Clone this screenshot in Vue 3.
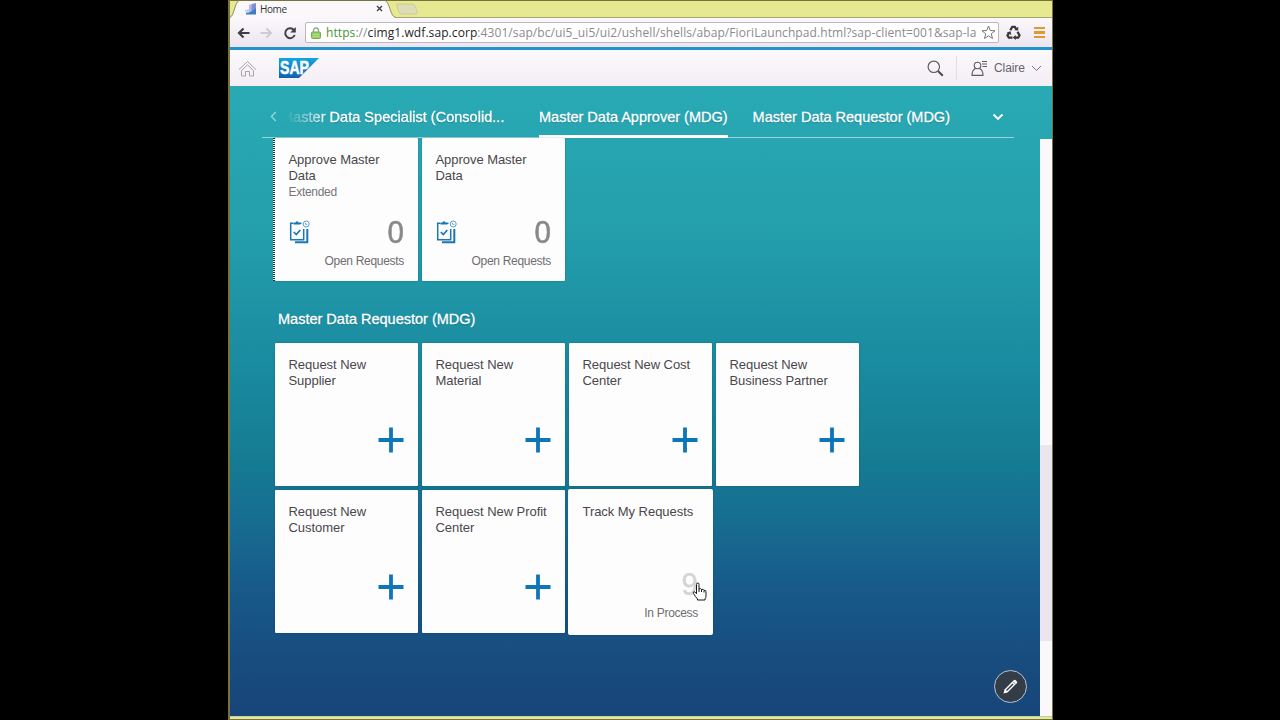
<template>
  <div class="screen">
    <div class="browser">
      <div class="tab-strip">
        <svg class="tab-shapes" width="200" height="18" viewBox="0 0 200 18">
          <path d="M0 17.500C4 16 5 2 9 1h146c5 1 5 16 11 16.500V18H0z" fill="#fbf8fb" />
          <path d="M0 17.500C4 16 5 2 9 .5M155 .5c5 1.500 5 16.500 11 17" fill="none" stroke="#8d8c5d" />
          <path d="M166.500 4h16q2 0 3 3l2 5q0 2-2 2h-14q-2 0-3-3z" fill="#dedcb6" stroke="#c3c190" stroke-width=".7" />
        </svg>
        <div class="tab-label">
          <svg width="12" height="12" viewBox="0 0 12 12">
            <path d="M0 7l4-1v5H1z" fill="#b9d9f2" />
            <path d="M4 2l3-1v10H4z" fill="#b9b5e4" />
            <path d="M7 1l4-1v11H6z" fill="#7f8fd4" />
            <path d="M1 10q5 0 10-5v6.500H1z" fill="#3b7cc6" />
          </svg>
          <span class="tab-name">Home</span>
          <svg class="tab-close" width="7" height="7" viewBox="0 0 7 7">
            <path d="M1 1l5 5M6 1L1 6" stroke="#3c3c40" stroke-width="1.300" />
          </svg>
        </div>
      </div>

      <div class="toolbar">
        <svg class="nav-icon" width="13" height="12" viewBox="0 0 13 12">
          <path d="M12.500 6H2M6.500 1.500L2 6l4.500 4.500" fill="none" stroke="#3f3f42" stroke-width="2.200" />
        </svg>
        <svg class="nav-icon" width="13" height="12" viewBox="0 0 13 12">
          <path d="M.5 6H11M6.500 1.500L11 6l-4.500 4.500" fill="none" stroke="#cfcbd0" stroke-width="2" />
        </svg>
        <svg class="nav-icon" width="14" height="14" viewBox="0 0 14 14">
          <path d="M11 4.200A4.900 4.900 0 1 0 11.700 9" fill="none" stroke="#3f3f42" stroke-width="2" />
          <path d="M12.800 1v5.500H7.300z" fill="#3f3f42" />
        </svg>
        <div class="address">
          <svg class="lock" width="10" height="12" viewBox="0 0 10 12">
            <path d="M2.500 6V3.500a2.500 2.500 0 0 1 5 0V6" fill="none" stroke="#9aa691" stroke-width="1.400" />
            <rect x=".5" y="5" width="9" height="6.500" rx="1" fill="#93cf62" stroke="#78ad52" />
            <path d="M2 7.500h6M2 9.500h6" stroke="#bce29b" stroke-width=".8" />
          </svg>
          <div class="url"><span class="scheme">https</span>://<span class="host">cimg1.wdf.sap.corp</span>:4301/sap/bc/ui5_ui5/ui2/ushell/shells/abap/FioriLaunchpad.html?sap-client=001&amp;sap-la</div>
          <svg class="star" width="15" height="15" viewBox="0 0 15 15">
            <path d="M7.500 1l1.800 4.500 4.700.3-3.700 3 1.200 4.700-4-2.600-4 2.600 1.200-4.700-3.700-3 4.700-.3z" fill="#fff" stroke="#77757c" />
          </svg>
        </div>
        <svg class="recycle" width="15" height="15" viewBox="0 0 15 15">
          <g fill="none" stroke="#38383b" stroke-width="2.300">
            <path d="M4.300 5.300l2-3.500h2.500l1.500 2.500" />
            <path d="M11.500 6.800l2 3.500-1.300 2.400H9" />
            <path d="M6.500 12.700H2.800L1.500 10.300l1.700-2.800" />
          </g>
          <path d="M8.500 5.200l3.800.3-.2-3.700zM9.700 10v5L6.800 12.500zM.8 7.500l3.700-1.200.9 3.600z" fill="#38383b" />
        </svg>
        <div class="menu-bars"><i></i><i></i><i></i></div>
      </div>

      <header class="shell">
        <svg class="home" width="19" height="17" viewBox="0 0 19 17">
          <g fill="none" stroke="#a5a2a8">
            <path d="M1 9.500L9.500 1.500 18 9.500" />
            <path d="M3.500 10.500l6-5.700 6 5.700V16h-4v-4.500h-4V16h-4z" />
          </g>
        </svg>
        <svg class="logo" width="40" height="20" viewBox="0 0 40 20">
          <defs>
            <linearGradient id="sapBlue" x1="0" y1="0" x2="0" y2="1">
              <stop offset="0" stop-color="#12a5e3" />
              <stop offset="1" stop-color="#1260b0" />
            </linearGradient>
          </defs>
          <path d="M0 0h40L20 20H0z" fill="url(#sapBlue)" />
          <text x="1" y="16" textLength="29" lengthAdjust="spacingAndGlyphs">SAP</text>
        </svg>
        <svg class="search" width="17" height="17" viewBox="0 0 17 17">
          <circle cx="6.800" cy="6.800" r="5.700" fill="none" stroke="#5d5b60" stroke-width="1.200" />
          <path d="M11 11l4.800 4.800" stroke="#4b494e" stroke-width="2" />
        </svg>
        <div class="user">
          <svg width="17" height="17" viewBox="0 0 17 17">
            <g fill="none" stroke="#5d5b60" stroke-width="1.100">
              <circle cx="6.500" cy="5.500" r="3.300" />
              <path d="M4.500 8.500Q1 10 1 15.400h11Q12 10 8.500 8.500M11 1.500h5M11 4h5M11.500 6.500H16" />
            </g>
          </svg>
          <span>Claire</span>
          <svg width="11" height="7" viewBox="0 0 11 7">
            <path d="M1 1l4.500 4.500L10 1" fill="none" stroke="#77757a" />
          </svg>
        </div>
      </header>

      <main class="launchpad">
        <nav class="groups">
          <svg class="prev" width="7" height="11" viewBox="0 0 7 11">
            <path d="M5.800 1L1.500 5.500 5.800 10" fill="none" stroke="#8ed3db" stroke-width="1.500" />
          </svg>
          <a class="group faded">Master Data Specialist (Consolid...</a>
          <a class="group active">Master Data Approver (MDG)</a>
          <a class="group">Master Data Requestor (MDG)</a>
          <svg class="more" width="12" height="8" viewBox="0 0 12 8">
            <path d="M1.500 1.500L6 6l4.500-4.500" fill="none" stroke="#fff" stroke-width="1.800" />
          </svg>
        </nav>

        <section class="tiles">
          <article v-for="(tile, i) in approveTiles" :key="i" class="tile" :class="{ focused: tile.focused }">
            <h3>{{ tile.title }}</h3>
            <p v-if="tile.subtitle" class="subtitle">{{ tile.subtitle }}</p>
            <div class="kpi">
              <svg width="22" height="24" viewBox="0 0 22 24">
                <g fill="none" stroke="#1b76b2" stroke-width="1.500">
                  <path d="M4 3.200H1.700v16.500h13V9M11.500 3.200h1M4.500 3.800h7" />
                  <path d="M18.300 9v13.300H6" stroke-width="2" />
                  <path d="M4.800 12l2.500 2.500 4-4.500" stroke-width="1.700" />
                </g>
                <path d="M4.500 4V2.500h2q1.500-2.500 3 0h2V4z" fill="#1b76b2" />
                <circle cx="17.200" cy="4" r="3" fill="#fff" stroke="#5b9fc5" />
                <path d="M16.500 2.800v1.500h1.800" fill="none" stroke="#5b9fc5" stroke-width=".9" />
              </svg>
              <span class="count">{{ tile.count }}</span>
            </div>
            <div class="unit">{{ tile.unit }}</div>
          </article>
        </section>

        <h2>Master Data Requestor (MDG)</h2>

        <section class="tiles">
          <article v-for="tile in requestTiles" :key="tile.title" class="tile" :class="{ hovered: tile.hovered }">
            <h3>{{ tile.title }}</h3>
            <template v-if="tile.unit">
              <div class="kpi loading">
                <span class="count">{{ tile.count }}</span>
              </div>
              <div class="unit">{{ tile.unit }}</div>
            </template>
            <svg v-else class="plus" width="26" height="26" viewBox="0 0 26 26">
              <path d="M13 .5v25M.5 13h25" stroke="#0d76b8" stroke-width="3.800" />
            </svg>
          </article>
        </section>

        <div class="scrollbar"><div class="thumb"></div></div>

        <button class="edit">
          <svg width="17" height="17" viewBox="0 0 17 17">
            <path d="M1.500 15.500l1-4L11.700 2.300q1-1 2 0l1 1q1 1 0 2L5.500 14.500z" fill="#fff" />
            <path d="M4.500 12.500l6.500-6.500" stroke="#343c47" stroke-width="1.400" />
            <path d="M11.200 3.800l2 2" stroke="#343c47" stroke-width=".7" />
          </svg>
        </button>
      </main>
    </div>

    <svg class="pointer" width="15" height="19" viewBox="0 0 15 19">
      <path
        d="M4.500 11V2.500q0-1.500 1.300-1.500T7 2.500V7q2-1 2.500.5 2-.8 2.500.8 2-.3 2 1.500v4q0 2-1 3v1.200H5.500V17q-2-2-4-5.500-.6-1.500.5-1.800 1 0 2.500 2zM7 7v3M9.500 7.500V10M12 8.500v2"
        fill="#fff"
        stroke="#161616"
        stroke-linejoin="round"
      />
    </svg>
  </div>
</template>

<script setup>
const approveTiles = [
  { title: 'Approve Master Data', subtitle: 'Extended', count: 0, unit: 'Open Requests', focused: true },
  { title: 'Approve Master Data', count: 0, unit: 'Open Requests' }
]

const requestTiles = [
  { title: 'Request New Supplier' },
  { title: 'Request New Material' },
  { title: 'Request New Cost Center' },
  { title: 'Request New Business Partner' },
  { title: 'Request New Customer' },
  { title: 'Request New Profit Center' },
  { title: 'Track My Requests', count: 9, unit: 'In Process', hovered: true }
]
</script>

<style>
body {
  background: #000;
}
</style>

<style scoped>
.screen {
  position: relative;
  display: flex;
  justify-content: center;
  width: 1280px;
  height: 720px;
  overflow: hidden;
  background: #000;
  font-family: "Liberation Sans", Arial, sans-serif;
}

.screen * {
  box-sizing: border-box;
}

.screen svg {
  display: block;
  flex: none;
}

.browser {
  display: flex;
  flex-direction: column;
  width: 825px;
  height: 720px;
  margin-left: 1px;
  padding-bottom: 2px;
  border: solid #77733f;
  border-width: 1px 1px 1px 2px;
  background: #e7e990;
}

.tab-strip {
  position: relative;
  height: 17px;
  flex: none;
  border-bottom: 1px solid #a6a672;
}

.tab-shapes {
  position: absolute;
  left: 0;
  top: -1px;
}

.tab-label {
  position: relative;
  display: flex;
  align-items: center;
  width: 138px;
  height: 15px;
  margin-left: 15px;
}

.tab-name {
  flex: 1;
  margin-left: 3px;
  font: 10px/14px "Open Sans", sans-serif;
  letter-spacing: -0.4px;
  color: #333;
}

.toolbar {
  display: flex;
  align-items: center;
  height: 29px;
  flex: none;
  padding-left: 7px;
  background: linear-gradient(#fbf8fb, #ece5ef);
}

.nav-icon {
  margin-right: 10px;
}

.address {
  display: flex;
  align-items: center;
  width: 694px;
  height: 21px;
  margin-left: -2px;
  padding: 0 2px 0 5px;
  background: #fff;
  border: 1px solid #bdb7c0;
  border-radius: 2px;
}

.url {
  flex: 1;
  margin-left: 5px;
  white-space: nowrap;
  font: 12px/19px "Open Sans", sans-serif;
  letter-spacing: 0.080px;
  color: #8c8a8f;
}

.scheme {
  color: #45923c;
}

.host {
  color: #252527;
}

.recycle {
  margin-left: 7px;
}

.menu-bars {
  display: grid;
  gap: 2px;
  margin-left: 13px;
}

.menu-bars i {
  width: 11px;
  height: 2.300px;
  background: #dc9b30;
}

.shell {
  display: flex;
  align-items: center;
  height: 39px;
  flex: none;
  padding: 0 10px 0 8px;
  border-top: 3px solid #2293cd;
  background: linear-gradient(#fbf9fc, #f4edf5);
}

.logo {
  margin-left: 22px;
}

.logo text {
  font: bold 17.500px "Liberation Sans", Arial, sans-serif;
  fill: #fff;
  stroke: #fff;
  stroke-width: 0.500px;
}

.search {
  margin-left: auto;
}

.user {
  display: flex;
  align-items: center;
  height: 24px;
  margin-left: 12px;
  padding-left: 14px;
  border-left: 1px solid #e2dce4;
  font-size: 12px;
  color: #66646a;
}

.user span {
  width: 31px;
  margin: 0 6px;
  letter-spacing: -0.1px;
}

.launchpad {
  position: relative;
  flex: 1;
  padding-left: 45px;
  border-bottom: 1px solid #b8cfaf;
  background: linear-gradient(#29aab5 0, #249fac 22%, #1a8ba0 44%, #157b93 60%, #176b91 70%, #17598a 80%, #184b7e 92%, #17457a 100%);
}

.groups {
  display: flex;
  align-items: center;
  width: 752px;
  height: 52px;
  margin-left: -13px;
  padding: 10px 10px 0 8px;
  border-bottom: 1px solid #96d7de;
}

.group,
h2 {
  font-size: 14.500px;
  font-weight: 400;
  line-height: 18px;
  color: #fff;
  white-space: nowrap;
  -webkit-text-stroke: 0.300px #fff;
  text-shadow: 0 1px 1px rgba(0, 50, 70, 0.4);
}

.group {
  display: flex;
  align-items: center;
  height: 42px;
  margin-right: 25px;
}

.faded {
  width: 229px;
  margin-left: 4px;
  margin-right: 29px;
  letter-spacing: 0.030px;
  mask-image: linear-gradient(to right, transparent 5px, #000 50px);
}

.active {
  border-bottom: 3px solid #fff;
  border-top: 3px solid transparent;
}

.more {
  margin-left: auto;
}

.tiles {
  display: grid;
  grid-template-columns: repeat(4, 142.500px);
  grid-auto-rows: 143px;
  gap: 4px 4.500px;
}

.tile {
  position: relative;
  display: flex;
  flex-direction: column;
  padding: 14px 13.500px 12px;
  background: #fefdfe;
  border-radius: 1px;
  box-shadow: 0 0 2px rgba(0, 50, 75, 0.35);
}

.focused::before {
  content: "";
  position: absolute;
  left: -2px;
  top: 0;
  bottom: 0;
  width: 2px;
  background: repeating-linear-gradient(#17333b 0 1px, #e9f6f7 1px 2px);
}

.hovered {
  margin: -1.500px;
  padding: 15.500px 15px 13.500px;
  border-radius: 2px;
}

.tile h3 {
  margin: 0;
  font-size: 13px;
  font-weight: 400;
  line-height: 16px;
  letter-spacing: -0.050px;
  color: #49474b;
}

.subtitle {
  margin: 1px 0 0;
  font-size: 12px;
  line-height: 14px;
  letter-spacing: -0.300px;
  color: #777579;
}

.kpi {
  display: flex;
  align-items: center;
  justify-content: space-between;
  height: 30px;
  margin-top: auto;
}

.count {
  margin-left: auto;
  font-size: 32px;
  line-height: 30px;
  color: #89888b;
  -webkit-text-stroke: 0.600px #89888b;
  transform: scaleX(0.92);
  transform-origin: right;
}

.unit {
  margin-top: 6px;
  text-align: right;
  font-size: 12px;
  line-height: 16px;
  letter-spacing: -0.300px;
  color: #6f6d71;
}

.loading {
  opacity: 0.35;
}

.plus {
  margin: auto 0 21px auto;
}

h2 {
  margin: 29px 0 15px 3px;
}

.scrollbar {
  position: absolute;
  right: 0;
  top: 53px;
  bottom: 0;
  width: 12px;
  padding-top: 306px;
  background: #fbf8fc;
}

.thumb {
  height: 196px;
  background: #ece5ed;
}

.edit {
  position: absolute;
  right: 25px;
  bottom: 13px;
  display: flex;
  align-items: center;
  justify-content: center;
  width: 33px;
  height: 33px;
  padding: 0;
  border: 1px solid #b4c5d2;
  border-radius: 50%;
  background: #343c47;
}

.pointer {
  position: absolute;
  left: 692px;
  top: 582px;
}
</style>
